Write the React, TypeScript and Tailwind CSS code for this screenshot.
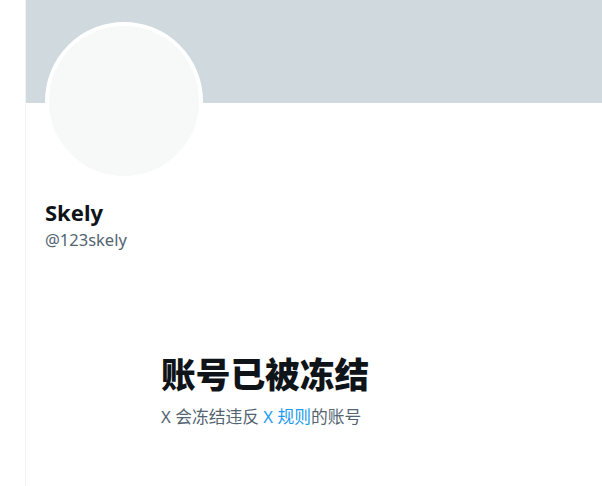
export default function App() {
  return (
    <div
      className="w-[602px] h-[486px] flex bg-white overflow-hidden"
      style={{ fontFamily: '"Noto Sans", "Noto Sans CJK SC", sans-serif' }}
    >
      <div className="w-[25px] shrink-0" />
      <div className="flex-1 flex flex-col border-l border-[#eff3f4]">
        <div className="h-[103px] bg-[#cfd9de]" />
        <div className="px-[19px]">
          <div className="w-[158px] h-[158px] -mt-[81px] rounded-full border-4 border-white bg-[#f7f9f9]" />
          <div className="mt-[18px] text-[22px] leading-[28px] font-bold text-[#0f1419]">Skely</div>
          <div className="mt-[3px] text-[16.5px] leading-[22px] text-[#536471]">@123skely</div>
        </div>
        <div className="mt-[104px] pl-[135px]">
          <h1 className="text-[34.7px] leading-[40px] font-extrabold text-[#0f1419]">账号已被冻结</h1>
          <p className="mt-[11px] text-[16.75px] leading-[22px] text-[#536471]">
            X 会冻结违反 <span className="text-[#1d9bf0]">X 规则</span>的账号
          </p>
        </div>
      </div>
    </div>
  )
}
